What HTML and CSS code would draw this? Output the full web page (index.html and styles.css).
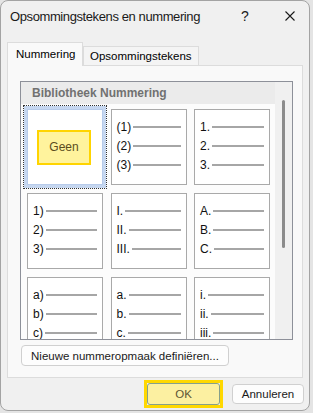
FILE: index.html
```html
<!DOCTYPE html>
<html lang="nl">
<head>
  <meta charset="UTF-8">
  <meta name="viewport" content="width=device-width, initial-scale=1.0">
  <title>Opsommingstekens en nummering</title>
  <link rel="stylesheet" href="styles.css">
</head>
<body>

<div class="window">
  <div class="titlebar">
    <span class="title">Opsommingstekens en nummering</span>
    <span class="help">?</span>
    <span class="close">
      <svg width="10" height="10" viewBox="0 0 10 10"><path d="M0.5 0.5 L9.5 9.5 M9.5 0.5 L0.5 9.5" stroke="#1a1a1a" stroke-width="1.1" fill="none"/></svg>
    </span>
  </div>

  <div class="content">
    <div class="tabs">
      <div class="tab active">Nummering</div>
      <div class="tab">Opsommingstekens</div>
    </div>

    <div class="panel">
      <div class="gallery">
        <div class="gallery-main">
          <div class="gallery-head">Bibliotheek Nummering</div>
          <div class="grid">
            <div class="cell selected"><div class="none">Geen</div></div>
            <div class="cell">
              <div class="row"><span>(1)</span><i></i></div>
              <div class="row"><span>(2)</span><i></i></div>
              <div class="row"><span>(3)</span><i></i></div>
            </div>
            <div class="cell">
              <div class="row"><span>1.</span><i></i></div>
              <div class="row"><span>2.</span><i></i></div>
              <div class="row"><span>3.</span><i></i></div>
            </div>
            <div class="cell">
              <div class="row"><span>1)</span><i></i></div>
              <div class="row"><span>2)</span><i></i></div>
              <div class="row"><span>3)</span><i></i></div>
            </div>
            <div class="cell">
              <div class="row"><span>I.</span><i></i></div>
              <div class="row"><span>II.</span><i></i></div>
              <div class="row"><span>III.</span><i></i></div>
            </div>
            <div class="cell">
              <div class="row"><span>A.</span><i></i></div>
              <div class="row"><span>B.</span><i></i></div>
              <div class="row"><span>C.</span><i></i></div>
            </div>
            <div class="cell">
              <div class="row"><span>a)</span><i></i></div>
              <div class="row"><span>b)</span><i></i></div>
              <div class="row"><span>c)</span><i></i></div>
            </div>
            <div class="cell">
              <div class="row"><span>a.</span><i></i></div>
              <div class="row"><span>b.</span><i></i></div>
              <div class="row"><span>c.</span><i></i></div>
            </div>
            <div class="cell">
              <div class="row"><span>i.</span><i></i></div>
              <div class="row"><span>ii.</span><i></i></div>
              <div class="row"><span>iii.</span><i></i></div>
            </div>
          </div>
        </div>
        <div class="scrollbar"><div class="thumb"></div></div>
      </div>
      <button class="btn define">Nieuwe nummeropmaak definiëren...</button>
    </div>

    <div class="footer">
      <span class="default-frame"><button class="btn ok">OK</button></span>
      <button class="btn cancel">Annuleren</button>
    </div>
  </div>
</div>

</body>
</html>
```

FILE: styles.css
```css
body {
  margin: 0;
  background: #e4e4e4;
  font-family: "Liberation Sans", Arial, sans-serif;
}

.window {
  box-sizing: border-box;
  width: 310px;
  height: 411px;
  background: #f0f0f0;
  border: 1px solid #a3a3a3;
  border-radius: 8px;
  overflow: hidden;
}

.titlebar {
  display: flex;
  align-items: center;
  height: 30px;
  padding-left: 9px;
  font-size: 13px;
  letter-spacing: -0.4px;
  color: #1a1a1a;
}

.title {
  flex: 1;
}

.help {
  width: 14px;
  font-size: 14px;
  letter-spacing: 0;
  margin-right: 30px;
}

.close {
  display: flex;
  margin-right: 14px;
}

.content {
  padding: 11px 6px 0;
}

/* tabs */
.tabs {
  display: flex;
  align-items: flex-end;
  height: 23px;
  font-size: 11.5px;
  color: #000;
}

.tab {
  box-sizing: border-box;
  height: 19px;
  padding: 3px 6px 0;
  background: #f4f4f4;
  border: 1px solid #dcdcdc;
  border-bottom: none;
}

.tab.active {
  height: 23px;
  width: 76px;
  padding: 5px 0 0 8px;
  background: #f9f9f9;
  position: relative;
  z-index: 1;
  margin-bottom: -1px;
  height: 24px;
}

/* tab panel */
.panel {
  box-sizing: border-box;
  height: 313px;
  padding: 15px 0 0 12px;
  background: #f9f9f9;
  border: 1px solid #dcdcdc;
}

.gallery {
  display: flex;
  width: 273px;
  height: 259px;
  box-sizing: border-box;
  border: 1px solid #8d9099;
  background: #fcfcfc;
}

.gallery-main {
  width: 254px;
  display: flex;
  flex-direction: column;
}

.gallery-head {
  height: 22px;
  line-height: 22px;
  padding-left: 11px;
  background: #ebebeb;
  font-size: 12px;
  font-weight: bold;
  color: #717171;
}

.grid {
  flex: 1;
  overflow: hidden;
  display: grid;
  grid-template-columns: repeat(3, 76px);
  grid-auto-rows: 76px;
  column-gap: 7.5px;
  row-gap: 8px;
  padding: 5px 0 0 6px;
}

.cell {
  box-sizing: border-box;
  border: 1px solid #a9a9a9;
  background: #fff;
  padding: 7px 5px 0 5px;
  font-size: 12px;
  color: #111;
}

.cell.selected {
  border-color: #b7cbea;
  box-shadow: 0 0 0 3px #c6d7f0;
  outline: 1px dotted #333;
  outline-offset: 3px;
  display: flex;
  align-items: center;
  justify-content: center;
  padding: 0;
}

.none {
  box-sizing: border-box;
  width: 54px;
  height: 35px;
  display: flex;
  align-items: center;
  justify-content: center;
  margin-left: -2px;
  background: #fff39d;
  border: 2px solid #ffd400;
  color: #5b4c1d;
}

.row {
  display: flex;
  align-items: center;
  height: 19px;
}

.row i {
  flex: 1;
  height: 2px;
  margin-left: 2px;
  background: #a6a6a6;
}

.scrollbar {
  width: 17px;
  background: #f0f0f0;
  padding-top: 18px;
}

.thumb {
  width: 3px;
  height: 148px;
  margin-left: 7px;
  border-radius: 1.5px;
  background: #8b8b8b;
}

/* buttons */
.btn {
  box-sizing: border-box;
  font-family: "Liberation Sans", Arial, sans-serif;
  font-size: 11.5px;
  color: #1a1a1a;
  background: #fdfdfd;
  border: 1px solid #d0d0d0;
  border-radius: 4px;
  padding: 0;
}

.define {
  display: block;
  margin: 5px 0 0 1px;
  width: 208px;
  height: 21px;
}

.footer {
  display: flex;
  justify-content: flex-end;
  align-items: center;
  gap: 9px;
  padding-top: 2px;
}

.default-frame {
  display: flex;
  border: 3px solid #ffd800;
}

.ok {
  width: 73px;
  height: 22px;
  background: #fcf0a1;
  border-color: #85a08b;
  border-radius: 3px;
  color: #5c5535;
}

.cancel {
  width: 72px;
  height: 20px;
  margin-right: -1px;
}
```
